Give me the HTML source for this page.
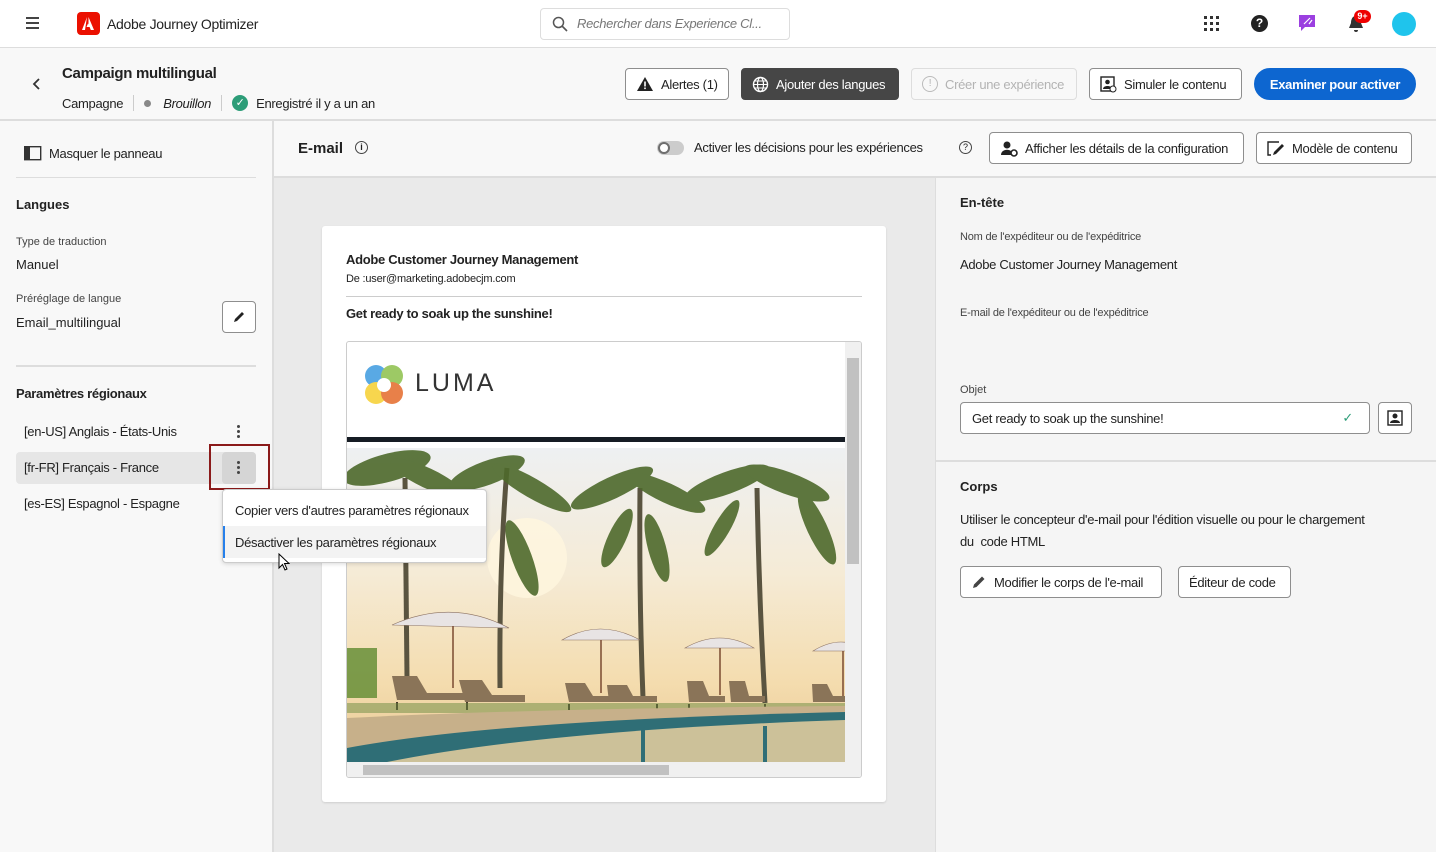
<!DOCTYPE html>
<html><head><meta charset="utf-8"><style>
*{box-sizing:border-box;margin:0;padding:0}
body{width:1436px;height:852px;overflow:hidden;font-family:"Liberation Sans",sans-serif;color:#222;background:#f8f8f8;position:relative;font-size:13px}
.a{position:absolute}
.btn{position:absolute;border:1px solid #8e8e8e;border-radius:4px;background:#fff;height:32px;display:flex;align-items:center;padding:0 10px;font-size:13px;color:#222;gap:7px;white-space:nowrap}
.lbl{font-size:11px;color:#444}
</style></head><body>
<!-- top bar -->
<div class="a" style="left:0;top:0;width:1436px;height:48px;background:#fff;border-bottom:1px solid #ddd"></div>
<div class="a" style="left:26px;top:17px;width:13px;height:2px;background:#444;box-shadow:0 5px 0 #444,0 10px 0 #444"></div>
<div class="a" style="left:77px;top:12px;width:23px;height:23px;background:#eb1000;border-radius:4px"><svg width="23" height="23" viewBox="0 0 23 23"><path d="M11.5 5 L17 18 H13.8 L12.6 15 H9.5 L11 11.5 L11.5 12.5Z M10 5 L5 18 H8 Z" fill="#fff"/></svg></div>
<div class="a" style="left:107px;top:16px;font-size:14px;letter-spacing:-0.3px">Adobe Journey Optimizer</div>
<div class="a" style="left:540px;top:8px;width:250px;height:32px;border:1px solid #ddd;border-radius:4px"></div>
<svg class="a" style="left:552px;top:16px" width="16" height="16"><circle cx="6.5" cy="6.5" r="5" fill="none" stroke="#555" stroke-width="1.5"/><path d="M10 10 L15 15" stroke="#555" stroke-width="1.6"/></svg>
<div class="a" style="left:577px;top:16px;font-size:13px;font-style:italic;color:#777;letter-spacing:-0.3px">Rechercher dans Experience Cl...</div>
<svg class="a" style="left:1203px;top:15px" width="18" height="18"><g fill="#333"><rect x="1" y="1" width="3" height="3"/><rect x="7" y="1" width="3" height="3"/><rect x="13" y="1" width="3" height="3"/><rect x="1" y="7" width="3" height="3"/><rect x="7" y="7" width="3" height="3"/><rect x="13" y="7" width="3" height="3"/><rect x="1" y="13" width="3" height="3"/><rect x="7" y="13" width="3" height="3"/><rect x="13" y="13" width="3" height="3"/></g></svg>
<div class="a" style="left:1251px;top:15px;width:17px;height:17px;border-radius:50%;background:#222;color:#fff;font-size:12px;font-weight:bold;text-align:center;line-height:17px">?</div>
<svg class="a" style="left:1298px;top:14px" width="19" height="19"><path d="M1 1 H17 V13 H7 L3 17 V13 H1Z" fill="#9b3fe0"/><path d="M6 10 L12 4 M11 10 L14 6" stroke="#fff" stroke-width="1.2"/></svg>
<svg class="a" style="left:1347px;top:14px" width="18" height="20"><path d="M9 2 C5 2 4 6 4 9 L2 14 H16 L14 9 C14 6 13 2 9 2Z M7 16 H11 A2 2 0 0 1 7 16Z" fill="#333"/></svg>
<div class="a" style="left:1354px;top:10px;width:17px;height:13px;border-radius:7px;background:#e00;color:#fff;font-size:9px;font-weight:bold;text-align:center;line-height:13px">9+</div>
<div class="a" style="left:1392px;top:12px;width:24px;height:24px;border-radius:50%;background:#1fc4ec"></div>
<!-- header -->
<div class="a" style="left:0;top:119px;width:1436px;height:2px;background:#ddd"></div>
<svg class="a" style="left:32px;top:78px" width="10" height="12"><path d="M7 1 L2 6 L7 11" fill="none" stroke="#333" stroke-width="1.8"/></svg>
<div class="a" style="left:62px;top:65px;font-size:15px;font-weight:bold;letter-spacing:-0.3px">Campaign multilingual</div>
<div class="a" style="left:62px;top:95px;font-size:13px;display:flex;align-items:center;white-space:nowrap;letter-spacing:-0.3px">Campagne<span style="width:1px;height:16px;background:#ccc;margin:0 10px"></span><span style="width:7px;height:7px;border-radius:50%;background:#888;margin-right:12px"></span><i>Brouillon</i><span style="width:1px;height:16px;background:#ccc;margin:0 10px"></span><span style="width:16px;height:16px;border-radius:50%;background:#2d9d78;color:#fff;font-size:11px;text-align:center;line-height:16px;margin-right:8px">✓</span>Enregistré il y a un an</div>
<div class="btn" style="left:625px;top:68px;width:104px;letter-spacing:-0.3px"><svg width="18" height="16"><path d="M9 1 L17 15 H1Z" fill="#222"/><rect x="8.2" y="5.5" width="1.6" height="5" fill="#fff"/><rect x="8.2" y="11.5" width="1.6" height="1.6" fill="#fff"/></svg>Alertes (1)</div>
<div class="btn" style="left:741px;top:68px;width:158px;background:#464646;border-color:#464646;color:#fff;letter-spacing:-0.3px"><svg width="17" height="17"><circle cx="8.5" cy="8.5" r="7" fill="none" stroke="#fff" stroke-width="1.4"/><ellipse cx="8.5" cy="8.5" rx="3" ry="7" fill="none" stroke="#fff" stroke-width="1.2"/><path d="M1.5 8.5 H15.5 M3 5 H14 M3 12 H14" stroke="#fff" stroke-width="1.1"/></svg>Ajouter des langues</div>
<div class="btn" style="left:911px;top:68px;width:166px;border-color:#ddd;color:#b3b3b3;background:#f8f8f8;letter-spacing:-0.3px"><span style="width:16px;height:16px;border:1.5px solid #bbb;border-radius:50%;font-size:10px;text-align:center;line-height:13px">!</span>Créer une expérience</div>
<div class="btn" style="left:1089px;top:68px;width:153px;letter-spacing:-0.3px"><svg width="17" height="17"><rect x="1" y="1" width="13" height="14" fill="none" stroke="#222" stroke-width="1.4"/><circle cx="7.5" cy="6" r="2.3" fill="#222"/><path d="M3 13 C3 9 12 9 12 13Z" fill="#222"/><circle cx="13" cy="13" r="3" fill="#fff" stroke="#222"/></svg>Simuler le contenu</div>
<div class="btn" style="left:1254px;top:68px;width:162px;background:#0d66d0;border-color:#0d66d0;color:#fff;font-weight:bold;border-radius:16px;justify-content:center;letter-spacing:-0.3px">Examiner pour activer</div>
<!-- left panel -->
<div class="a" style="left:272px;top:121px;width:2px;height:731px;background:#ddd"></div>
<svg class="a" style="left:24px;top:146px" width="18" height="15"><rect x="0.7" y="0.7" width="16" height="13" fill="none" stroke="#333" stroke-width="1.4"/><rect x="1" y="1" width="5" height="13" fill="#333"/></svg>
<div class="a" style="left:49px;top:146px;font-size:13px;letter-spacing:-0.3px">Masquer le panneau</div>
<div class="a" style="left:16px;top:177px;width:240px;height:1px;background:#ddd"></div>
<div class="a" style="left:16px;top:197px;font-size:13px;font-weight:bold">Langues</div>
<div class="a lbl" style="left:16px;top:236px">Type de traduction</div>
<div class="a" style="left:16px;top:257px">Manuel</div>
<div class="a lbl" style="left:16px;top:293px">Préréglage de langue</div>
<div class="a" style="left:16px;top:315px">Email_multilingual</div>
<div class="btn" style="left:222px;top:301px;width:34px;justify-content:center;padding:0"><svg width="14" height="14"><path d="M2 12 L3 9 L10 2 L12 4 L5 11Z" fill="#222"/></svg></div>
<div class="a" style="left:16px;top:365px;width:240px;height:2px;background:#ddd"></div>
<div class="a" style="left:16px;top:386px;font-size:13px;font-weight:bold;letter-spacing:-0.3px">Paramètres régionaux</div>
<div class="a" style="left:24px;top:424px;letter-spacing:-0.3px">[en-US] Anglais - États-Unis</div>
<div class="a" style="left:237px;top:425px;width:3px;height:3px;background:#444;border-radius:50%;box-shadow:0 5px 0 #444,0 10px 0 #444"></div>
<div class="a" style="left:16px;top:452px;width:240px;height:32px;background:#e6e6e6;border-radius:4px"></div>
<div class="a" style="left:24px;top:460px;letter-spacing:-0.3px">[fr-FR] Français - France</div>
<div class="a" style="left:222px;top:452px;width:34px;height:32px;background:#d5d5d5;border-radius:4px"></div>
<div class="a" style="left:237px;top:461px;width:3px;height:3px;background:#444;border-radius:50%;box-shadow:0 5px 0 #444,0 10px 0 #444"></div>
<div class="a" style="left:209px;top:444px;width:61px;height:46px;border:2px solid #8b1a1a"></div>
<div class="a" style="left:24px;top:496px;letter-spacing:-0.3px">[es-ES] Espagnol - Espagne</div>
<!-- toolbar -->
<div class="a" style="left:274px;top:176px;width:1162px;height:2px;background:#ddd"></div>
<div class="a" style="left:298px;top:140px;font-size:15px;font-weight:bold">E-mail</div>
<div class="a" style="left:355px;top:141px;width:13px;height:13px;border:1.3px solid #444;border-radius:50%;font-size:9px;text-align:center;line-height:11px;font-weight:bold">i</div>
<div class="a" style="left:657px;top:141px;width:27px;height:14px;border-radius:7px;background:#ccc"><div style="position:absolute;left:1px;top:1px;width:12px;height:12px;border-radius:50%;background:#fff;border:2px solid #6e6e6e"></div></div>
<div class="a" style="left:694px;top:140px;letter-spacing:-0.3px">Activer les décisions pour les expériences</div>
<div class="a" style="left:959px;top:141px;width:13px;height:13px;border:1.3px solid #444;border-radius:50%;font-size:9px;text-align:center;line-height:11px">?</div>
<div class="btn" style="left:989px;top:132px;width:255px;letter-spacing:-0.3px"><svg width="18" height="17"><circle cx="7" cy="5" r="3.5" fill="#222"/><path d="M1 15 C1 8 13 8 13 15Z" fill="#222"/><circle cx="14" cy="13" r="3" fill="#fff" stroke="#222" stroke-width="1.6"/></svg>Afficher les détails de la configuration</div>
<div class="btn" style="left:1256px;top:132px;width:156px;letter-spacing:-0.3px"><svg width="18" height="17"><path d="M12 2 H1 V15 H4" fill="none" stroke="#222" stroke-width="1.4"/><path d="M6 15 L7 12 L15 4 L17 6 L9 14Z" fill="#222"/></svg>Modèle de contenu</div>
<!-- canvas -->
<div class="a" style="left:274px;top:178px;width:661px;height:674px;background:#eaeaea"></div>
<div class="a" style="left:322px;top:226px;width:564px;height:576px;background:#fff;border-radius:3px;box-shadow:0 1px 2px rgba(0,0,0,.12)"></div>
<div class="a" style="left:346px;top:252px;font-weight:bold;font-size:13px;letter-spacing:-0.3px">Adobe Customer Journey Management</div>
<div class="a" style="left:346px;top:273px;font-size:11px;letter-spacing:-0.2px">De :user@marketing.adobecjm.com</div>
<div class="a" style="left:346px;top:296px;width:516px;height:1px;background:#ccc"></div>
<div class="a" style="left:346px;top:306px;font-weight:bold;font-size:13px;letter-spacing:-0.3px">Get ready to soak up the sunshine!</div>
<div class="a" style="left:346px;top:341px;width:516px;height:437px;border:1px solid #ccc;border-radius:3px;background:#fff;overflow:hidden">
 <svg class="a" style="left:16px;top:22px" width="42" height="42"><g opacity=".85"><circle cx="13" cy="12" r="11" fill="#3d9be0"/><circle cx="29" cy="12" r="11" fill="#8cc04a"/><circle cx="13" cy="29" r="11" fill="#f6d030"/><circle cx="29" cy="29" r="11" fill="#e46a2a"/></g><circle cx="21" cy="21" r="7" fill="#fff"/></svg>
 <div class="a" style="left:68px;top:27px;font-size:25px;letter-spacing:3px;color:#333">LUMA</div>
 <div class="a" style="left:0;top:95px;width:498px;height:5px;background:#161c24"></div>
 <svg class="a" style="left:0;top:106px" width="498" height="314" viewBox="0 0 498 314">
  <defs><linearGradient id="sk" x1="0" y1="0" x2="0" y2="1"><stop offset="0" stop-color="#eef0f2"/><stop offset=".4" stop-color="#f5ebd6"/><stop offset=".75" stop-color="#f4dcae"/><stop offset="1" stop-color="#e8c894"/></linearGradient></defs>
  <rect width="498" height="314" fill="url(#sk)"/>
  <circle cx="180" cy="110" r="40" fill="#fff6df" opacity=".8"/>
  <g stroke="#5a5440" stroke-width="5" fill="none"><path d="M58 30 L60 230"/><path d="M160 20 Q152 120 153 240"/><path d="M293 40 Q292 150 296 250"/><path d="M410 40 Q412 150 418 255"/></g>
  <g fill="#4e6a2c" opacity=".9">
   <ellipse cx="40" cy="20" rx="45" ry="14" transform="rotate(-15 40 20)"/><ellipse cx="80" cy="30" rx="40" ry="10" transform="rotate(25 80 30)"/>
   <ellipse cx="140" cy="25" rx="40" ry="12" transform="rotate(-20 140 25)"/><ellipse cx="185" cy="40" rx="45" ry="10" transform="rotate(30 185 40)"/><ellipse cx="175" cy="110" rx="10" ry="40" transform="rotate(-20 175 110)"/>
   <ellipse cx="265" cy="40" rx="45" ry="11" transform="rotate(-25 265 40)"/><ellipse cx="320" cy="45" rx="42" ry="10" transform="rotate(25 320 45)"/><ellipse cx="310" cy="100" rx="9" ry="35" transform="rotate(-15 310 100)"/><ellipse cx="270" cy="90" rx="9" ry="32" transform="rotate(25 270 90)"/>
   <ellipse cx="380" cy="35" rx="45" ry="11" transform="rotate(-20 380 35)"/><ellipse cx="440" cy="35" rx="45" ry="11" transform="rotate(20 440 35)"/><ellipse cx="470" cy="80" rx="10" ry="40" transform="rotate(-25 470 80)"/><ellipse cx="375" cy="80" rx="8" ry="32" transform="rotate(30 375 80)"/>
  </g>
  <g fill="#e8e4e4" stroke="#8a7060" stroke-width=".6"><path d="M45 177 Q105 150 162 180Z"/><path d="M215 192 Q253 170 293 192Z"/><path d="M338 200 Q373 180 407 200Z"/><path d="M466 203 Q495 185 520 203Z"/></g>
  <g stroke="#7a4a30" stroke-width="1.5"><path d="M106 178 V240"/><path d="M254 192 V245"/><path d="M373 200 V247"/><path d="M496 203 V250"/></g>
  <rect x="0" y="200" width="30" height="50" fill="#5e8a30" opacity=".8"/>
  <g fill="#8a7458"><path d="M45 228 L70 228 L80 245 L120 245 V252 L50 252Z"/><path d="M112 232 L135 232 L145 247 L178 247 V254 L118 254Z"/><path d="M218 235 L238 235 L246 248 L270 248 V254 L222 254Z"/><path d="M260 237 L280 237 L286 248 L310 248 V254 L262 254Z"/><path d="M340 233 L356 233 L362 248 L378 248 V254 L342 254Z"/><path d="M382 233 L398 233 L402 248 L418 248 V254 L384 254Z"/><path d="M465 236 L480 236 L486 248 L498 248 V254 L466 254Z"/></g>
  <g stroke="#4a3c2c" stroke-width="2"><path d="M50 254 V262 M120 254 V262 M222 256 V262 M310 256 V262 M342 256 V262 M418 256 V262"/></g>
  <rect x="0" y="255" width="498" height="10" fill="#6a8a40" opacity=".5"/>
  <path d="M0 270 Q200 260 498 258 V314 H0Z" fill="#c7b08a"/>
  <path d="M0 300 Q150 272 498 264 V314 H0Z" fill="#2f6e76"/>
  <path d="M40 314 Q200 282 498 272 V314Z" fill="#e8d0a0" opacity=".85"/>
  <g stroke="#2f6e76" stroke-width="4"><path d="M296 282 V314 M418 278 V314"/></g>
 </svg>
 <div class="a" style="left:498px;top:0;width:16px;height:420px;background:#f0f0f0"><div style="margin:16px 2px;height:206px;background:#c1c1c1"></div></div>
 <div class="a" style="left:0;top:420px;width:514px;height:16px;background:#f0f0f0"><div style="margin:3px 16px;width:306px;height:10px;background:#c1c1c1"></div></div>
</div>
<!-- right panel -->
<div class="a" style="left:935px;top:178px;width:501px;height:674px;background:#f5f5f5;border-left:1px solid #ddd"></div>
<div class="a" style="left:960px;top:195px;font-weight:bold">En-tête</div>
<div class="a lbl" style="left:960px;top:231px;letter-spacing:-0.2px">Nom de l'expéditeur ou de l'expéditrice</div>
<div class="a" style="left:960px;top:257px;letter-spacing:-0.3px">Adobe Customer Journey Management</div>
<div class="a lbl" style="left:960px;top:307px;letter-spacing:-0.2px">E-mail de l'expéditeur ou de l'expéditrice</div>
<div class="a lbl" style="left:960px;top:384px">Objet</div>
<div class="a" style="left:960px;top:402px;width:410px;height:32px;border:1px solid #8e8e8e;border-radius:4px;background:#fff;padding:8px 11px;letter-spacing:-0.3px">Get ready to soak up the sunshine!<span style="position:absolute;right:16px;top:7px;color:#2d9d78">✓</span></div>
<div class="btn" style="left:1378px;top:402px;width:34px;justify-content:center;padding:0"><svg width="16" height="16"><rect x="1" y="1" width="14" height="14" fill="none" stroke="#222" stroke-width="1.4"/><circle cx="8" cy="6" r="2.5" fill="#222"/><path d="M3 13 C3 9 13 9 13 13Z" fill="#222"/></svg></div>
<div class="a" style="left:936px;top:460px;width:500px;height:2px;background:#ddd"></div>
<div class="a" style="left:960px;top:479px;font-weight:bold">Corps</div>
<div class="a" style="left:960px;top:509px;line-height:22px;width:430px;letter-spacing:-0.3px">Utiliser le concepteur d'e-mail pour l'édition visuelle ou pour le chargement<br>du&nbsp; code HTML</div>
<div class="btn" style="left:960px;top:566px;width:202px;letter-spacing:-0.3px"><svg width="16" height="16"><path d="M2 14 L3 10.5 L11 2.5 L13.5 5 L5.5 13Z" fill="#444"/></svg>Modifier le corps de l'e-mail</div>
<div class="btn" style="left:1178px;top:566px;width:113px;letter-spacing:-0.3px">Éditeur de code</div>
<!-- dropdown -->
<div class="a" style="left:222px;top:489px;width:265px;height:74px;background:#fff;border:1px solid #ccc;border-radius:4px;box-shadow:0 1px 4px rgba(0,0,0,.15)"></div>
<div class="a" style="left:235px;top:503px;letter-spacing:-0.3px">Copier vers d'autres paramètres régionaux</div>
<div class="a" style="left:223px;top:526px;width:263px;height:32px;background:#f3f3f3;border-left:2px solid #2680eb"></div>
<div class="a" style="left:235px;top:535px;letter-spacing:-0.3px">Désactiver les paramètres régionaux</div>
<svg class="a" style="left:278px;top:553px" width="12" height="19"><path d="M1 1 V15 L4.5 11.5 L7 17 L9 16 L6.5 10.5 H11Z" fill="#fff" stroke="#000"/></svg>
</body></html>
